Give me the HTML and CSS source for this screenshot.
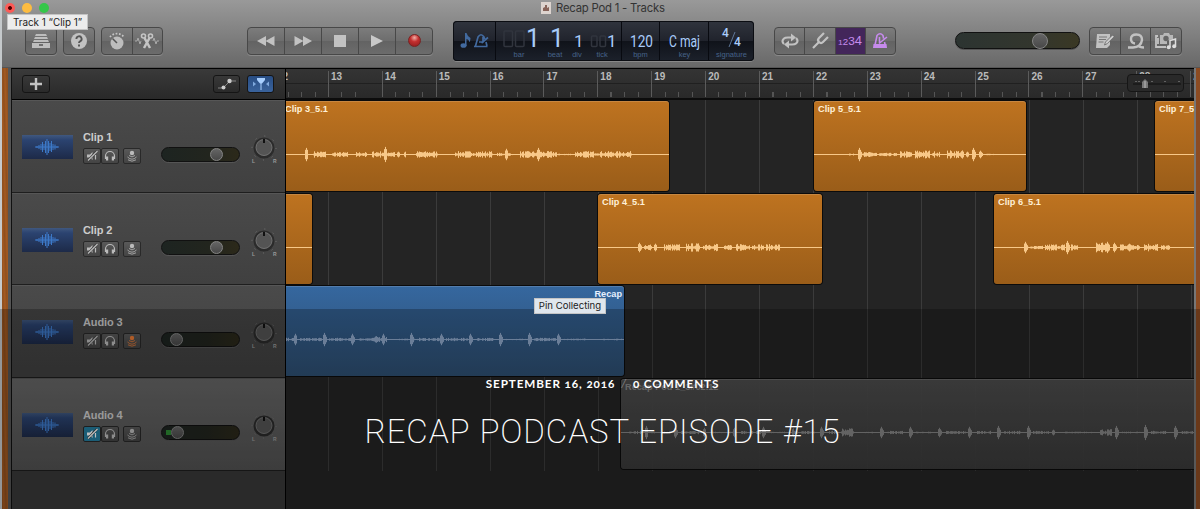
FILE: index.html
```html
<!DOCTYPE html>
<html lang="en">
	<head>
		<meta charset="UTF-8" />
		<title>Recap Podcast Episode #15</title>
		<link rel="stylesheet" href="styles.css">
	</head>
	<body>
		<!-- shared icons -->
		<svg class="defs">
			<symbol id="mute" viewBox="0 0 16 14">
				<path d="M3 5.500h3l2.500-2.500v8L6 8.500H3z" fill="currentColor" />
				<path d="M13 2L4 11.500" stroke="#3b3b3b" stroke-width="2.400" />
				<path d="M13.500 2L4 11.500M11.500 6v4.500" stroke="currentColor" stroke-width="1.200" />
			</symbol>
			<symbol id="phones" viewBox="0 0 16 14">
				<path d="M3.500 10V7a4.500 4.500 0 0 1 9 0v3" stroke="currentColor" stroke-width="1.200" fill="none" />
				<path d="M4 7.500h2.200v4H4zM9.800 7.500H12v4H9.800z" fill="currentColor" />
			</symbol>
			<symbol id="monitor" viewBox="0 0 16 14">
				<circle cx="8" cy="4" r="2.200" fill="currentColor" />
				<path d="M5 6.500q3 2.800 6 0M3.500 8q4.500 4.400 9 0M4 10.800q4 2.800 8 0" stroke="currentColor" stroke-width=".8" fill="none" />
			</symbol>
			<symbol id="wave" viewBox="0 0 50 24">
				<path d="M13 12h24M15 11v2M17 10v4M19 9v6M20.500 7v10M22 9v6M23.500 6v12M25 4v16M26.500 6v12M28 8v8M29.500 6v11M31 9v6M33 9.500v5M35 11v2" stroke="#3c79c8" />
			</symbol>
			<symbol id="knob" viewBox="0 0 30 32">
				<circle cx="15" cy="16" r="12" fill="none" stroke="#777" stroke-dasharray="1 8.420" />
				<circle cx="15" cy="16" r="10.500" fill="#2b2b2b" />
				<circle cx="15" cy="15.500" r="8" fill="#545454" stroke="#727272" />
				<path d="M15 7v4" stroke="#111" stroke-width="2" />
				<text x="3" y="31" class="knob-text">L</text>
				<text x="24" y="31" class="knob-text">R</text>
			</symbol>
		</svg>

		<div class="window">
			<div class="titlebar">
				<div class="lights"><i class="close"></i><i class="min"></i><i class="max"></i></div>
				<svg width="10" height="12" viewBox="0 0 10 12"><path d="M0 0h10v12H0z" fill="#ddd4cf" /><path d="M2 9V6l2-1V3h2v3l2-1v4z" fill="#876359" /></svg>
				<span>Recap Pod 1 - Tracks</span>
			</div>

			<div class="toolbar">
				<div class="group library">
					<button><svg width="20" height="18" viewBox="0 0 20 18"><path d="M5 2h10l1 2H4zM4 5h12l1 2H3zM3 8h14l1 2H2zM1 11h18v5H1z" fill="#bdbdbd" /><path d="M8 13h4" stroke="#555" stroke-width="1.500" /></svg></button>
				</div>
				<div class="group help">
					<button><svg width="18" height="18" viewBox="0 0 18 18"><circle cx="9" cy="9" r="8" fill="#c2c2c2" /><path d="M6.400 7a2.600 2.600 0 1 1 3.900 2.200Q9 9.900 9 11M9 12.500v2" stroke="#555" stroke-width="1.900" fill="none" /></svg></button>
				</div>
				<div class="group smart">
					<button><svg width="20" height="20" viewBox="0 0 20 20"><circle cx="10" cy="12" r="6.500" fill="#bdbdbd" /><path d="M10 12L5.500 7.500" stroke="#555" stroke-width="1.500" /><path d="M3 6a9 9 0 0 1 14 0" fill="none" stroke="#c5c5c5" stroke-width="1.700" stroke-dasharray="1.700 1.600" /></svg></button>
					<button><svg width="24" height="18" viewBox="0 0 24 18"><path d="M0 9h2l1-3 2 6 1-3M18 9l1-3 2 6 1-3h2" stroke="#aaa" fill="none" /><g fill="none" stroke="#c4c4c4" stroke-width="1.600"><circle cx="8.500" cy="4" r="2" /><circle cx="15.500" cy="4" r="2" /><path d="M9.500 6L15 16M14.500 6L9 16" stroke-width="2.500" /></g></svg></button>
				</div>
				<div class="group transport">
					<button><svg width="20" height="12" viewBox="0 0 20 12"><path d="M10 1v10L1 6zM18.500 1v10l-9-5z" fill="#c2c2c2" /></svg></button>
					<button><svg width="20" height="12" viewBox="0 0 20 12"><path d="M1.500 1v10l9-5zM10 1v10l9-5z" fill="#c2c2c2" /></svg></button>
					<button><svg width="12" height="12"><path d="M0 0h12v12H0z" fill="#c2c2c2" /></svg></button>
					<button><svg width="14" height="14" viewBox="0 0 14 14"><path d="M1 1v12l12-6z" fill="#c8c8c8" /></svg></button>
					<button><span class="record"></span></button>
				</div>

				<div class="lcd">
					<svg width="300" height="40" viewBox="0 0 300 40">
						<path d="M42.500 1v38M168.500 1v38M206.500 1v38M255.500 1v38" stroke="#080a10" />
						<g fill="#426a9f">
							<ellipse cx="10.500" cy="24.500" rx="3" ry="2.300" />
							<path d="M12 12h1.500q1 3.500 4 5-.2 4-1.500 4 .5-2-2.500-3v7H12z" />
						</g>
						<path d="M22.500 25l2.500-9q3-4.500 6 0l.5 2M33 21l1 4M21 25.500h13.500M26 21h4v-5M28.500 22l6.500-5.500" fill="none" stroke="#426a9f" stroke-width="1.700" />
						<g class="ghost">
							<rect x="51" y="10" width="8.500" height="15.500" rx="1" /><rect x="62.500" y="10" width="8.500" height="15.500" rx="1" />
							<rect x="138.500" y="15" width="5.500" height="10.500" rx="1" /><rect x="147" y="15" width="5.500" height="10.500" rx="1" />
						</g>
						<g class="digits">
							<text x="73" y="26" class="big">1</text>
							<text x="97" y="26" class="big">1</text>
							<text x="121" y="26">1</text>
							<text x="154" y="26">1</text>
							<text x="177" y="26" textLength="23" lengthAdjust="spacingAndGlyphs">120</text>
							<text x="216" y="26" textLength="31" lengthAdjust="spacingAndGlyphs">C maj</text>
							<text x="269" y="16" class="small">4</text>
							<text x="281" y="25" class="small">4</text>
						</g>
						<path d="M276 26l6-15" stroke="#6f8cb4" stroke-width=".8" />
						<g class="labels">
							<text x="66" y="35.500">bar</text>
							<text x="102" y="35.500">beat</text>
							<text x="124" y="35.500">div</text>
							<text x="149" y="35.500">tick</text>
							<text x="187.500" y="35.500">bpm</text>
							<text x="231.500" y="35.500">key</text>
							<text x="278.500" y="35.500">signature</text>
						</g>
					</svg>
				</div>

				<div class="group modes">
					<button><svg width="20" height="18" viewBox="0 0 20 18"><path d="M4 12Q1 9 4 6.500q1-1 4-1h4M16 6q3 3 0 5.500-1 1-4 1H8" fill="none" stroke="#c2c2c2" stroke-width="2.200" /><path d="M11 1.500l5 4-5 4zM9 8.500v8l-5-4z" fill="#c2c2c2" /></svg></button>
					<button><svg width="18" height="18" viewBox="0 0 18 18"><path d="M2 16l6-6M8 10q-2-2 0-4l5-5M8 10q2 2 4 0l5-5" fill="none" stroke="#c2c2c2" stroke-width="2.200" /></svg></button>
					<button class="on count"><svg width="26" height="14"><text x="1" y="11" textLength="24" lengthAdjust="spacingAndGlyphs"><tspan font-size="8">1</tspan><tspan font-size="9">2</tspan><tspan font-size="11">3</tspan><tspan font-size="12">4</tspan></text></svg></button>
					<button><svg width="16" height="18" viewBox="0 0 16 18"><path d="M3 13L5 3.500q3-3.500 6 0l.6 3M12.500 10l.7 3M7.500 11V5M7 11.500L15 5" fill="none" stroke="#c68bec" stroke-width="1.600" /><path d="M1.500 12h13l.5 4H1z" fill="#c68bec" /></svg></button>
				</div>
				<div class="slider master"><span></span></div>
				<div class="group media">
					<button><svg width="20" height="18" viewBox="0 0 20 18"><path d="M2 2h13v11l-3 3H1z" fill="#c2c2c2" /><path d="M4 5h8M4 7.500h7M3.500 10h5" stroke="#777" /><path d="M9.500 13l1-3 7-7 1.700 1.700-7 7z" fill="#d0d0d0" stroke="#666" stroke-width=".8" /></svg></button>
					<button><svg width="20" height="18" viewBox="0 0 20 18"><path d="M2 15.500h5q8-.5 9-7.500 0-5.500-5.500-5.500T5 7q0 4 4 4.500M12 13.500q1.500 2 6 2" fill="none" stroke="#c2c2c2" stroke-width="2.400" /></svg></button>
					<button><svg width="24" height="20" viewBox="0 0 24 20"><path d="M4 5H2v11h10M4 7v6" fill="none" stroke="#c2c2c2" stroke-width="1.800" /><path d="M6 4h3l1-2h5l1 2h3v4l-6 1.500V13H6z" fill="#b8b8b8" /><circle cx="12" cy="7.500" r="2.700" fill="#666" /><path d="M16 16V9.500l5.500-1.500v7" fill="none" stroke="#ddd" stroke-width="1.500" /><circle cx="14.700" cy="16.300" r="2" fill="#ddd" /><circle cx="20.200" cy="15.300" r="2" fill="#ddd" /></svg></button>
				</div>
			</div>

			<div class="workspace">
				<div class="wood"></div>
				<div class="sidebar">
					<div class="sidebar-head">
						<button class="add"><svg width="12" height="12"><path d="M6 0v12M0 6h12" stroke="#c4c4c4" stroke-width="2.400" /></svg></button>
						<button><svg width="20" height="14" viewBox="0 0 20 14"><path d="M1 11h5l7-7h6" fill="none" stroke="#999" stroke-width=".8" /><circle cx="6.500" cy="10.500" r="2" fill="#ccc" /><circle cx="12.500" cy="4" r="2.200" fill="#ccc" /></svg></button>
						<button class="catch"><svg width="20" height="12" viewBox="0 0 20 12"><path d="M6 0h8v2l-3 3.500H9L6 2z" fill="#a9d0ff" /><path d="M10 5v7" stroke="#a9d0ff" /><path d="M2 3.500v5L5 6zM18 3.500v5L15 6z" fill="#7ea8dc" /></svg></button>
					</div>
					<div class="track">
						<div class="thumb"><svg width="50" height="24"><use href="#wave" /></svg></div>
						<div class="info">
							<b>Clip 1</b>
							<div class="switches"><i><svg><use href="#mute" /></svg></i><i><svg><use href="#phones" /></svg></i><i class="input"><svg><use href="#monitor" /></svg></i></div>
						</div>
						<div class="slider"><span></span></div>
						<svg class="knob"><use href="#knob" /></svg>
					</div>
					<div class="track">
						<div class="thumb"><svg width="50" height="24"><use href="#wave" /></svg></div>
						<div class="info">
							<b>Clip 2</b>
							<div class="switches"><i><svg><use href="#mute" /></svg></i><i><svg><use href="#phones" /></svg></i><i class="input"><svg><use href="#monitor" /></svg></i></div>
						</div>
						<div class="slider"><span></span></div>
						<svg class="knob"><use href="#knob" /></svg>
					</div>
					<div class="track">
						<div class="thumb"><svg width="50" height="24"><use href="#wave" /></svg></div>
						<div class="info">
							<b>Audio 3</b>
							<div class="switches"><i><svg><use href="#mute" /></svg></i><i><svg><use href="#phones" /></svg></i><i class="input live"><svg><use href="#monitor" /></svg></i></div>
						</div>
						<div class="slider low"><span></span></div>
						<svg class="knob"><use href="#knob" /></svg>
					</div>
					<div class="track selected">
						<div class="thumb"><svg width="50" height="24"><use href="#wave" /></svg></div>
						<div class="info">
							<b>Audio 4</b>
							<div class="switches"><i class="muted"><svg><use href="#mute" /></svg></i><i><svg><use href="#phones" /></svg></i><i class="input"><svg><use href="#monitor" /></svg></i></div>
						</div>
						<div class="slider low level"><span></span></div>
						<svg class="knob"><use href="#knob" /></svg>
					</div>
				</div>

				<div class="timeline">
					<div class="ruler" id="ruler"></div>
					<div class="zoomer"><svg width="57" height="17"><path d="M5 9h48" stroke="#111" /><path d="M8 6v1M11 6v1M24 6v1M37 6v1M51 6v1" stroke="#999" /><path d="M14 13V7l3-3 3 3v6z" fill="#777" /><path d="M17 6v7" stroke="#bbb" /></svg></div>
					<div class="lane">
						<div class="clip c3" data-wave="19,3,7 27,13,4 46,16,3 70,11,3 86,23,4 98,3,8 111,3,3 118,2,3 130,22,4 169,38,4 211,16,2 219,3,6 234,37,4 251,4,7 272,15,1 289,57,4"><b>Clip 3_5.1</b></div>
						<div class="clip c5" data-wave="35,6,2 44,5,7 49,14,3 65,18,2 86,12,4 101,15,5 118,8,4 133,17,5 152,3,3 158,4,7 165,4,4 172,8,1"><b>Clip 5_5.1</b></div>
						<div class="clip c7" data-wave=""><b>Clip 7_5.1</b></div>
					</div>
					<div class="lane">
						<div class="clip c2" data-wave=""></div>
						<div class="clip c4" data-wave="40,5,5 46,8,4 56,3,4 66,16,4 88,14,5 105,15,5 126,8,3 138,14,5 154,12,4 168,14,4"><b>Clip 4_5.1</b></div>
						<div class="clip c6" data-wave="30,5,6 36,13,2 51,20,4 72,4,7 77,7,4 102,14,7 119,5,5 126,20,5 150,14,5 167,9,3"><b>Clip 6_5.1</b></div>
					</div>
					<div class="lane">
						<div class="clip blue" data-wave="0,8,2 8,3,6 14,22,2 37,4,7 43,22,2 65,4,6 72,16,2 88,13,4 96,3,6 110,12,1 124,5,7 130,24,2 154,4,6 160,22,2 183,4,6 190,18,2 213,4,7 220,22,1 242,4,7 248,22,2 271,4,6 278,20,1 297,5,1 308,30,1"><b>Recap</b></div>
					</div>
					<div class="lane">
						<div class="clip gray" data-wave="8,12,2 24,3,7 30,20,1 53,4,6 60,18,2 82,3,5 90,24,1 112,3,5 120,20,2 141,4,6 150,16,1 171,6,5 180,14,2 199,5,6 208,8,2 220,13,5 243,11,1 259,4,6 266,18,2 288,4,6 295,15,1 317,4,5 325,20,2 347,4,6 356,14,2 376,4,7 383,18,2 406,4,7 412,16,2 431,3,3 442,34,1 479,12,4 494,4,7 501,18,1 523,4,8 530,16,2 553,4,7 560,14,2"><b>Recap Pod 1_3#02.12</b></div>
					</div>
				</div>
				<div class="wood right"></div>
			</div>
		</div>

		<div class="tip track-tip">Track 1 “Clip 1”</div>
		<div class="tip pin-tip">Pin Collecting</div>

		<div class="caption">
			<p><span>September 16, 2016</span><em>/</em><span>0 Comments</span></p>
			<h1>Recap Podcast Episode #15</h1>
		</div>

		<script>
			const ruler = document.getElementById("ruler");
			for (let bar = 12; bar <= 29; bar++) {
				const cell = document.createElement("span");
				cell.textContent = bar;
				ruler.appendChild(cell);
			}

			// every group is "start,length,amplitude" in pixels
			let seed = 7;
			function random() {
				seed = (seed * 16807) % 2147483647;
				return seed / 2147483647;
			}

			document.querySelectorAll(".clip").forEach((clip) => {
				let path = "M0 8.5H900";
				clip.dataset.wave.split(" ").filter(Boolean).forEach((group) => {
					const [start, length, amp] = group.split(",").map(Number);
					for (let x = start; x < start + length; x++) {
						// short groups are single hits that fade out, long ones are speech
						const h = length < 6 ? amp * (0.95 - Math.abs(x - start - 1) * 0.28) : amp * (0.2 + random() * 0.65);
						path += `M${x + 0.5} ${(8.5 - h).toFixed(1)}v${(h * 2).toFixed(1)}`;
					}
				});
				clip.insertAdjacentHTML("beforeend", `<svg class="waveform"><path d="${path}" /></svg>`);
			});
		</script>
	</body>
</html>
```

FILE: styles.css
```css
* {
	box-sizing: border-box;
}

body {
	margin: 0;
	width: 1200px;
	height: 509px;
	overflow: hidden;
	position: relative;
	background: #fff;
	font-family: "Liberation Sans", Arial, sans-serif;
}

svg {
	display: block;
}

.defs {
	position: absolute;
	width: 0;
	height: 0;
}

.window {
	height: 509px;
	padding-top: 2px;
	border-left: 2px solid #c5c9cb;
	background: linear-gradient(#999 0, #696969 66px, #666 100%);
}

.titlebar {
	display: flex;
	align-items: center;
	height: 18px;
	padding: 0 0 6px 3px;
	font: 11.300px Inter, sans-serif;
	color: #333;
}

.titlebar span {
	margin-left: 5px;
	letter-spacing: -0.2px;
}

.lights {
	display: flex;
	gap: 7px;
	width: 536px;
}

.lights i {
	width: 10px;
	height: 10px;
	border-radius: 50%;
	background: #35c649;
}

.lights .min {
	background: #fdbc40;
}

.lights .close {
	background: radial-gradient(#4d0000 1.5px, #fc5b57 2.3px);
}

.toolbar {
	display: flex;
	align-items: center;
	height: 47px;
	padding: 0 0 6px 23px;
}

.group {
	display: flex;
	height: 28px;
	border: 1px solid #484848;
	border-radius: 4px;
	background: linear-gradient(#7c7c7c, #6d6d6d 50%, #636363 51%, #6c6c6c);
	box-shadow: 0 1px 0 #8a8a8a;
	overflow: hidden;
}

button {
	display: flex;
	flex: 1;
	align-items: center;
	justify-content: center;
	padding: 0;
	border: 0;
	background: none;
}

.group button + button {
	border-left: 1px solid #484848;
}

.library {
	width: 32px;
	margin-right: 6px;
}

.help {
	width: 32px;
	margin-right: 6px;
}

.smart {
	width: 62px;
	margin-right: 84px;
}

.transport {
	width: 186px;
	margin-right: 20px;
}

.record {
	width: 13px;
	height: 13px;
	border-radius: 50%;
	background: radial-gradient(circle at 50% 25%, #f0b0a8 0, #c43030 40%, #8c1b1b 100%);
	border: 1px solid #7a2222;
}

.lcd {
	width: 301px;
	height: 40px;
	margin-right: 20px;
	border-radius: 4px;
	background: linear-gradient(#30343d, #20232c 50%, #10131a 51%, #1c212b);
	box-shadow: inset 0 0 0 1px #0b0d12, 0 1px 0 #888;
}

.digits {
	fill: #a9ccfa;
	font: 17px Roboto, sans-serif;
}

.digits .big {
	font-size: 25px;
}

.digits .small {
	font-size: 12px;
	font-weight: 500;
}

.labels {
	fill: #466389;
	font: 7.500px "Liberation Sans", sans-serif;
	text-anchor: middle;
}

.ghost {
	fill: none;
	stroke: #31353e;
	stroke-width: 1.5;
}

.modes {
	width: 122px;
	margin-right: 59px;
}

.group .on {
	background: #43265a;
}

.count text {
	fill: #c68bec;
	font-family: "Liberation Sans", sans-serif;
}

.master.slider {
	width: 125px;
	height: 17px;
	margin: 0 9px 0 0;
	padding-left: 76px;
	background: linear-gradient(90deg, #2c3431, #33362d 65%, #3a3824);
}

.media {
	width: 93px;
}

.slider {
	display: flex;
	align-items: center;
	width: 79px;
	height: 15px;
	padding-left: 48px;
	border: 1px solid #111;
	border-radius: 9px;
	background: linear-gradient(90deg, #1d2421, #22251e 60%, #2c291a);
	box-shadow: 0 1px 0 #555;
}

.slider span {
	width: 13px;
	height: 13px;
	flex: none;
	border-radius: 50%;
	border: 1px solid #858585;
	background: linear-gradient(#656565, #484848);
}

.master span {
	width: 16px;
	height: 16px;
}

.slider.low {
	padding-left: 8px;
}

.slider.level {
	padding-left: 4px;
}

.level::before {
	content: "";
	width: 5px;
	height: 5px;
	background: #2d8a33;
}

.workspace {
	display: flex;
	height: 442px;
	border-top: 1px solid #555;
}

.wood {
	width: 9px;
	flex: none;
	border-right: 3px solid #555;
	background: repeating-linear-gradient(88deg, #8f4e1c 0, #a35a22 2px, #90501f 4px);
}

.wood.right {
	width: 6px;
	border-right: 0;
	border-left: 2px solid #777;
	background: #8c4b22;
}

.sidebar {
	width: 274px;
	flex: none;
	background: #393939;
	border-left: 1px solid #111;
	border-top: 1px solid #000;
}

.sidebar-head {
	display: flex;
	align-items: center;
	height: 31px;
	padding: 0 11px 1px 10px;
	gap: 7px;
	background: linear-gradient(#3a3a3a, #292929);
	border-bottom: 1px solid #000;
}

.sidebar-head button {
	flex: none;
	width: 27px;
	height: 18px;
	border: 1px solid #151515;
	border-radius: 3px;
	background: linear-gradient(#383838, #2a2a2a);
}

.sidebar-head .add {
	margin-right: auto;
	width: 28px;
}

.sidebar-head .catch {
	background: linear-gradient(#284d83, #3a639c);
}

.track {
	display: flex;
	height: 92.700px;
	padding-left: 10px;
	border-bottom: 1px solid #1e1e1e;
	border-top: 1px solid #565656;
	background: linear-gradient(#4a4a4a, #404040);
}

.track.selected {
	background: linear-gradient(#666, #515151);
}

.thumb {
	width: 51px;
	height: 24px;
	margin: 34px 10px 0 0;
	background: linear-gradient(#40587f 0, #2b4370 5px, #1d2a48 100%);
}

.info {
	width: 78px;
	margin-top: 30px;
}

.info b {
	display: block;
	height: 17px;
	font: bold 11px/13px "Liberation Sans", sans-serif;
	letter-spacing: -0.1px;
	color: #ccc;
}

.switches {
	display: flex;
}

.switches i {
	width: 18px;
	height: 16px;
	border: 1px solid #292929;
	border-radius: 2px;
	background: linear-gradient(#595959, #444);
	color: #bbb;
}

.switches svg {
	width: 16px;
	height: 14px;
}

.switches .input {
	margin-left: 4px;
}

.switches .live {
	color: #eb7b35;
}

.switches .muted {
	background: #247c9e;
	color: #fff;
}

.track .slider {
	margin: 46px 9px 0 0;
}

.knob {
	width: 30px;
	height: 32px;
	margin-top: 31px;
}

.knob-text {
	font: bold 5px "Liberation Sans", sans-serif;
	fill: #999;
}

.timeline {
	position: relative;
	width: 909px;
	flex: none;
	overflow: hidden;
	background: #242424;
	border-left: 1px solid #000;
	border-top: 1px solid #000;
}

.ruler {
	display: flex;
	height: 31px;
	padding: 2px 0 1px;
	background: linear-gradient(transparent 14px, #202020 14px 15px, transparent 15px), linear-gradient(#343434, #292929);
	border-bottom: 2px solid #0c0c0c;
}

.ruler span {
	width: 53.900px;
	flex: none;
	padding: 0 0 0 2px;
	border-left: 1px solid #5b5b5b;
	font: bold 10px/12px "Liberation Sans", sans-serif;
	color: #bbb;
	background: repeating-linear-gradient(90deg, transparent 0 12.500px, #555 12.500px 13.500px) 0 100% / 100% 5px no-repeat;
}

.ruler span:first-child {
	margin-left: -12px;
}

.zoomer {
	position: absolute;
	top: 5px;
	right: 10px;
	width: 57px;
	height: 18px;
	border: 1px solid #161616;
	border-radius: 4px;
	background: #292929;
}

.lane {
	display: flex;
	height: 92.700px;
	padding-top: 1px;
	background: repeating-linear-gradient(90deg, #3b3b3b 0 1px, transparent 1px 53.900px) -11.800px 0 / 1000px 100% no-repeat;
}

.clip {
	flex: none;
	height: 90px;
	padding: 2px 4px;
	border-radius: 3px;
	overflow: hidden;
	background: linear-gradient(#be7320, #9a5d19);
	box-shadow: 0 0 0 1px #0b0b0b, inset 0 1px 0 rgba(255, 255, 255, 0.15);
	font-size: 9.200px;
	line-height: 13px;
	color: #fff0d8;
}

.clip b {
	display: block;
	height: 13px;
	white-space: nowrap;
}

.waveform {
	width: 900px;
	height: 17px;
	margin: 30px 0 0 -4px;
	fill: none;
	stroke: #f8c888;
}

.c3 {
	width: 383px;
	border-radius: 0 3px 3px 0;
}

.c3 b {
	margin-left: -5px;
}

.c5 {
	width: 212px;
	margin-left: 145px;
}

.c7 {
	width: 60px;
	margin-left: 129px;
}

.c2 {
	width: 26px;
	border-radius: 0 3px 3px 0;
}

.c2 .waveform {
	margin-top: 43px;
}

.c4 {
	width: 224px;
	margin-left: 286px;
}

.c6 {
	width: 230px;
	margin-left: 172px;
}

.blue {
	width: 338px;
	padding-right: 2px;
	border-radius: 0 3px 3px 0;
	background: linear-gradient(#35679f, #2e4f72);
	color: #e5efff;
}

.blue b {
	text-align: right;
}

.blue .waveform {
	stroke: #8fa8cb;
}

.gray {
	width: 600px;
	margin-left: 335px;
	background: linear-gradient(rgba(79, 79, 79, 0.94), rgba(59, 59, 59, 0.94));
	color: #898989;
}

.gray .waveform {
	stroke: #858585;
}

.tip {
	position: absolute;
	height: 16px;
	border: 1px solid #c4c4c4;
	background: #ececec;
	font: 9.600px/14px Inter, sans-serif;
	color: #222;
	text-align: center;
	white-space: nowrap;
}

.track-tip {
	left: 7px;
	top: 14px;
	width: 81px;
	font-size: 9.900px;
}

.pin-tip {
	left: 534px;
	top: 298px;
	width: 72px;
	z-index: 2;
	background: #dfe6ed;
}

.caption {
	position: absolute;
	left: 0;
	right: 0;
	top: 309px;
	height: 200px;
	background: rgba(0, 0, 0, 0.25);
	color: #fff;
	text-align: center;
	text-transform: uppercase;
}

.caption p {
	margin: 66px 0 0 5px;
	font: 700 11.700px/16px Lato, sans-serif;
	font-variant-numeric: oldstyle-nums;
	letter-spacing: 0.9px;
}

.caption em {
	margin: 0 6px;
	font-weight: 300;
	opacity: 0.6;
}

.caption h1 {
	margin: 20px 0 0 5px;
	font: 200 33px/42px "Roboto Slab", Roboto, sans-serif;
	letter-spacing: 0.9px;
}
```
